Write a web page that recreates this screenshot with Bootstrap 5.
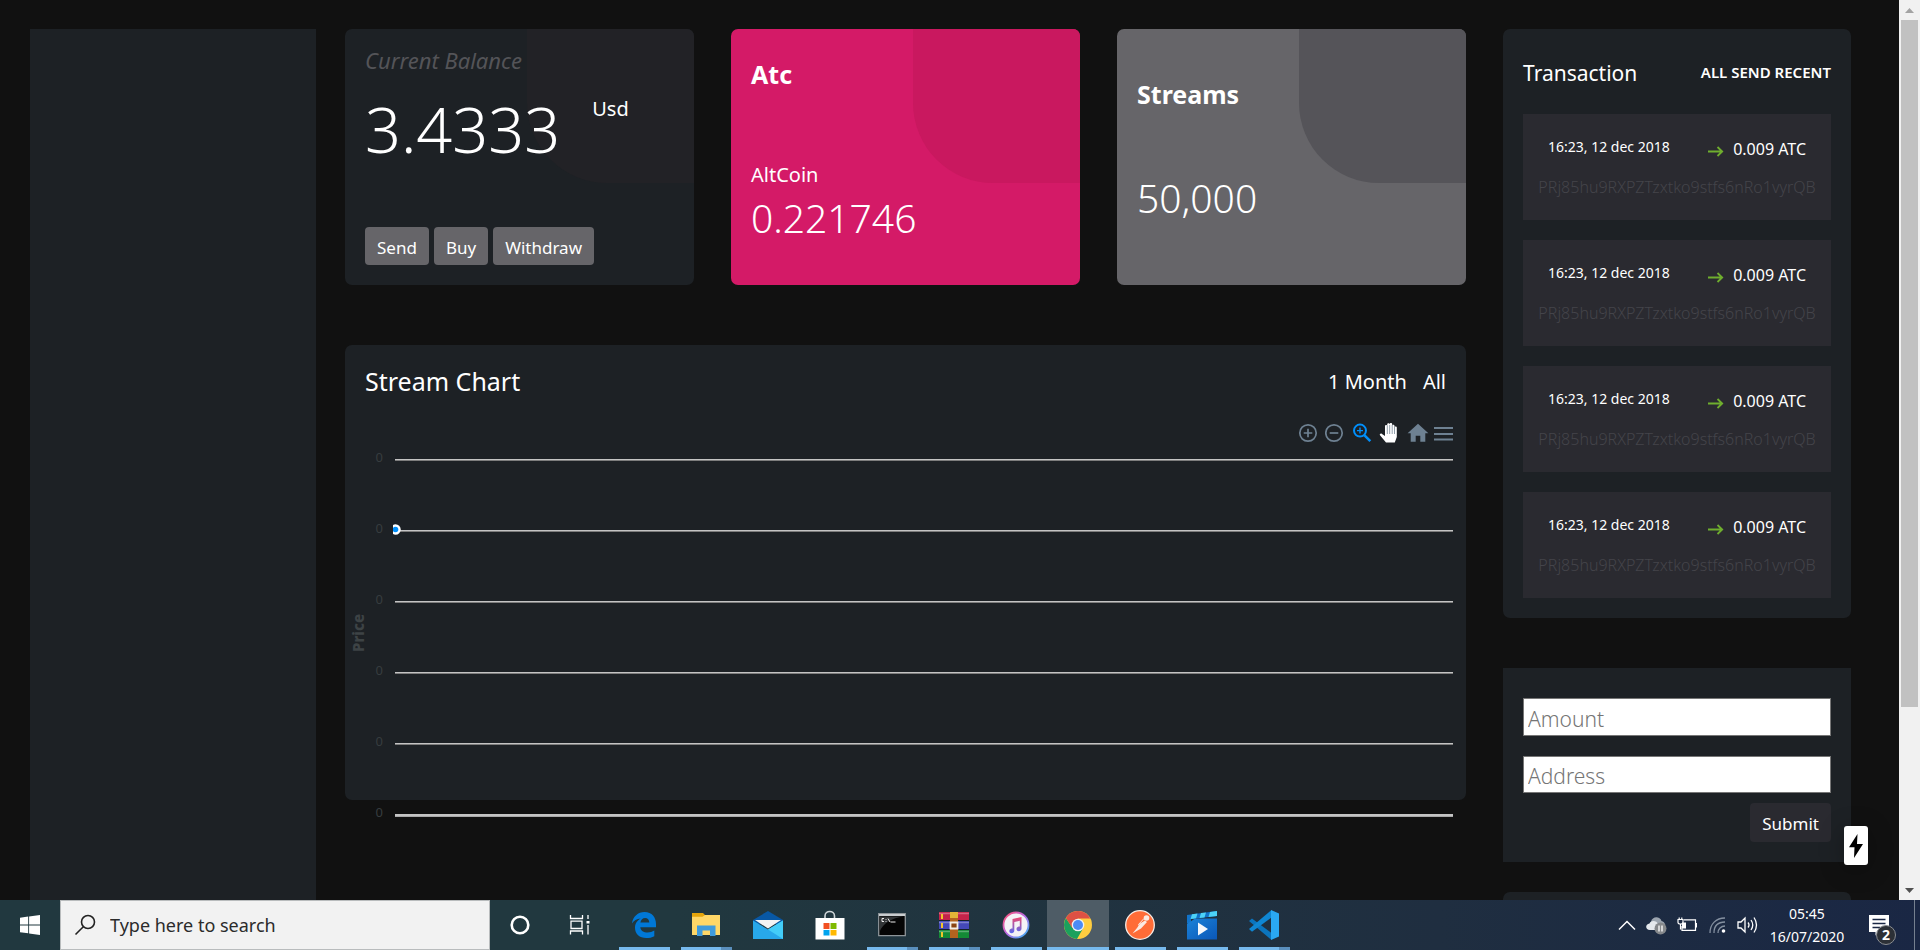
<!DOCTYPE html>
<html lang="en">
<head>
<meta charset="utf-8">
<meta name="viewport" content="width=device-width, initial-scale=1">
<title>Wallet dashboard</title>
<link href="https://cdn.jsdelivr.net/npm/bootstrap@5.3.0/dist/css/bootstrap.min.css" rel="stylesheet">
<style>
  :root { --panel: #1d2125; --tile: #2a2a30; --page: #111; --muted-ink: #44444a; }
  body { background: var(--page); color: #fff; font-family: "Noto Sans", sans-serif; font-size: 20px; line-height: 30px; }
  a { color: inherit; text-decoration: none; }

  /* viewport of the browser */
  .view { min-height: 0; }
  .page { padding: 29px 48px 0 30px; min-width: 0; }
  .side { flex: 286 1 0; background: var(--panel); margin-right: 29px; }
  .center-col { flex: 1121 1 0; min-width: 0; margin-right: 37px; }
  .right-col { flex: 348 1 0; min-width: 0; }
  .panel { background: var(--panel); border-radius: 7px; }

  /* stat cards */
  .stats { display: grid; grid-template-columns: repeat(3, 1fr); gap: 37px; margin-bottom: 60px; }
  .stat { position: relative; overflow: hidden; min-height: 256px; padding: 0 20px 20px; border-radius: 7px; background: var(--panel); isolation: isolate; }
  .stat::before { content: ""; position: absolute; z-index: -1; top: 0; right: 0; width: 167px; height: 154px; border-bottom-left-radius: 80px; background: var(--corner); }
  .stat-balance { --corner: #222226; padding-top: 16px; }
  .stat-atc { --corner: #c9185f; background: #d41a67; padding-top: 26px; }
  .stat-streams { --corner: #555459; background: #666569; padding-top: 46px; }
  .caption { color: #545458; font-style: italic; font-size: 22px; margin-bottom: 14px; }
  .balance { font-size: 63px; line-height: 80px; font-weight: 300; }
  .unit { margin: 5px 0 0 32px; }
  .stat-name { font-size: 25px; line-height: 38px; font-weight: 700; }
  .figure-num { font-size: 39px; line-height: 50px; font-weight: 300; }
  .coin { margin-top: 67px; margin-bottom: 3px; }
  .gap-60 { margin-top: 60px; }
  .acts { gap: 5px; }
  .act { border: 0; border-radius: 4px; background: #666569; color: #fff; font-size: 17px; line-height: 24px; padding: 9px 12px 5px; }

  /* chart */
  .chart { height: 455px; padding-top: 17px; }
  .chart-title { font-size: 25px; line-height: 38px; font-weight: 400; }
  .chart-head { padding: 0 20px; margin-bottom: 21px; }
  .ranges { padding-top: 2px; }
  .tools { height: 24px; padding-right: 12px; margin-bottom: 4px; gap: 7px; }
  .tool { border: 0; padding: 0; background: none; display: flex; }
  .plot { padding: 0 13px 0 4px; }
  .axis-title { writing-mode: vertical-rl; transform: rotate(180deg); width: 18px; font-family: "Noto Sans", sans-serif; font-size: 15px; line-height: 18px; font-weight: 800; color: #3d4345; padding-top: 10px; }
  .grid-row { height: 22px; gap: 12px; color: #373d3f; font-size: 13px; line-height: 16px; }
  .grid-row span { width: 16px; text-align: right; }
  .grid-row i { position: relative; margin-top: 10px; height: 2px; background: #c4c4c4; border-bottom: 1px solid #7d7d7d; }
  .grid-row.base i { height: 3px; border-bottom-color: #a9a9a9; }
  .rows { gap: 49px; }
  .point { position: absolute; left: -2px; top: -6px; }

  /* transactions */
  .trans { padding: 29px 20px 20px; margin-bottom: 50px; }
  .trans-title { font-size: 21px; line-height: 30px; font-weight: 400; }
  .filters { font-size: 15px; font-weight: 600; line-height: 28px; }
  .trans-list { gap: 20px; margin-top: 26px; }
  .entry { background: var(--tile); padding: 23px 0 21px; }
  .entry-row { padding: 0 25px; margin-bottom: 14px; }
  .when { font-size: 14px; line-height: 20px; }
  .sum { font-size: 16px; line-height: 24px; }
  .hash { color: var(--muted-ink); font-size: 16px; line-height: 24px; font-weight: 300; text-align: center; white-space: nowrap; }

  /* send form */
  .send { background: var(--panel); height: 194px; padding: 30px 20px 20px; margin-bottom: 30px; }
  .field { width: 100%; height: 38px; border: 1px solid #767676; border-radius: 0; background: #fff; color: #222; padding: 3px 4px 0; margin-bottom: 20px; font-size: 21px; display: block; }
  .field + .field { margin-bottom: 10px; height: 37px; }
  .field::placeholder { color: #757575; opacity: 1; font-weight: 300; }
  .submit { background: var(--tile); padding-bottom: 6px; }
  .bolt { position: absolute; right: 52px; bottom: 35px; width: 24px; height: 39px; border: 0; border-radius: 3px; padding: 0; background: #fff; box-shadow: 0 4px 24px rgba(0,0,0,.3); display: flex; align-items: center; justify-content: center; }

  /* scroll bar */
  .scroller { width: 21px; background: #f1f1f1; }
  .scroller b { width: 17px; flex: 0 0 76.3%; background: #c1c1c1; }
  .scroller svg { height: 20px; flex: none; }

  /* task bar */
  .taskbar { height: 50px; flex: none; background: linear-gradient(90deg, #21383f 0, #21383f 35%, #1f2e40 75%, #1a2744 100%); }
  .start { width: 60px; }
  .tb { border: 0; padding: 0; background: none; display: flex; align-items: center; justify-content: center; height: 50px; }
  .search { width: 430px; background: #f2f2f2; border: 1px solid #b9bcbd; color: #2b2b2b; padding-left: 13px; gap: 14px; }
  .search input { border: 0; background: none; padding: 0; font: 400 18px/24px "Noto Sans", sans-serif; outline: 0; }
  .search input::placeholder { color: #2b2b2b; opacity: 1; }
  .sys { width: 60px; }
  .apps { margin-left: 3px; }
  .app { width: 62px; position: relative; }
  .app.run::after { content: ""; position: absolute; left: 6px; right: 5px; bottom: 0; height: 3px; background: #76b9ed; }
  .app.multi::after { background: linear-gradient(90deg, #76b9ed 0 40px, #5a8fbd 40px); }
  .app.front { background: #4e5c66; }
  .app.front::after { left: 0; right: 0; }
  .clock { font-size: 14px; line-height: 23px; width: 78px; text-align: center; }
  .tray { gap: 10px; margin-right: 18px; }
  .tray svg { flex: none; }
  .notice { position: relative; margin-left: 3px; display: flex; }
  .notice-count { position: absolute; right: 0; bottom: -3px; width: 20px; height: 20px; border-radius: 50%; border: 1px solid #8a8d91; background: #2c3036; font-size: 14px; line-height: 18px; font-weight: 700; text-align: center; }
  .peek { width: 6px; height: 50px; border-left: 1px solid #75808f; }
</style>
</head>
<body class="vh-100 d-flex flex-column overflow-hidden">

<div class="view d-flex flex-grow-1 position-relative">
  <div class="page d-flex flex-grow-1 overflow-hidden">
    <aside class="side"></aside>

    <main class="center-col">
      <section class="stats">
        <div class="stat stat-balance d-flex flex-column">
          <div class="caption">Current Balance</div>
          <div class="d-flex align-items-start">
            <div class="balance">3.4333</div>
            <div class="unit">Usd</div>
          </div>
          <div class="acts d-flex mt-auto">
            <button class="act" type="button">Send</button>
            <button class="act" type="button">Buy</button>
            <button class="act" type="button">Withdraw</button>
          </div>
        </div>
        <div class="stat stat-atc">
          <div class="stat-name">Atc</div>
          <div class="coin">AltCoin</div>
          <div class="figure-num">0.221746</div>
        </div>
        <div class="stat stat-streams">
          <div class="stat-name">Streams</div>
          <div class="figure-num gap-60">50,000</div>
        </div>
      </section>

      <section class="panel chart">
        <div class="chart-head d-flex justify-content-between align-items-center">
          <h2 class="chart-title m-0">Stream Chart</h2>
          <div class="ranges d-flex gap-3"><a href="#">1 Month</a><a href="#">All</a></div>
        </div>
        <div class="tools d-flex justify-content-end align-items-center">
          <button class="tool" type="button" aria-label="Zoom in"><svg width="20" height="20" viewBox="0 0 20 20" fill="none" stroke="#6e8192" stroke-width="1.7"><circle cx="10" cy="10" r="8.2"/><path d="M10 5.7v8.6M5.7 10h8.6"/></svg></button>
          <button class="tool" type="button" aria-label="Zoom out"><svg width="20" height="20" viewBox="0 0 20 20" fill="none" stroke="#6e8192" stroke-width="1.7"><circle cx="9" cy="10" r="8.2"/><path d="M4.7 10h8.6"/></svg></button>
          <button class="tool" type="button" aria-label="Zoom selection"><svg width="20" height="20" viewBox="0 0 20 20" fill="none" stroke="#008ffb"><circle cx="8" cy="7.6" r="6" stroke-width="2"/><path d="M12.3 12.2l6 6" stroke-width="2.6"/><path d="M8 4.6v6M5 7.6h6" stroke-width="1.4"/></svg></button>
          <button class="tool" type="button" aria-label="Pan"><svg width="20" height="22" viewBox="0 0 20 22"><path d="M7 20.5L1 13.2c-.8-1 .8-2.300 2-1.300l3 2.200V4.200c0-1.600 2.200-1.600 2.200 0V2.600c0-1.800 2.500-1.800 2.500 0v-.3c0-1.600 2.500-1.600 2.500 0v1.500c0-1.500 2.300-1.500 2.300 0v1.800c0-1.400 2.300-1.400 2.300 0V15l-2 5.500z" fill="#fff"/><path d="M8.300 3.500V12M10.700 3V12M13.200 3V12M15.500 5V12" stroke="#8795a1" stroke-width=".9"/></svg></button>
          <button class="tool" type="button" aria-label="Reset zoom"><svg width="23" height="20" viewBox="-1 0 23 20"><path d="M11 .8L.6 10.200h3.100V18.800h5v-6h4.600v6h5v-8.600h3.100z" fill="#6e8192"/></svg></button>
          <button class="tool" type="button" aria-label="Menu"><svg width="18" height="20" viewBox="2 0 18 20" overflow="visible"><path d="M0 5h19M0 11h19M0 16.500h19" stroke="#6e8192" stroke-width="2.200"/></svg></button>
        </div>
        <div class="plot d-flex">
          <div class="axis-title align-self-center">Price</div>
          <div class="rows d-flex flex-column flex-grow-1">
            <div class="grid-row d-flex"><span>0</span><i class="flex-grow-1"></i></div>
            <div class="grid-row d-flex"><span>0</span><i class="flex-grow-1"><svg class="point" width="8" height="12" viewBox="0 0 8 12"><circle cx="2.500" cy="5.500" r="5.200" fill="#fff"/><circle cx="2.500" cy="5.500" r="2.800" fill="#008ffb"/></svg></i></div>
            <div class="grid-row d-flex"><span>0</span><i class="flex-grow-1"></i></div>
            <div class="grid-row d-flex"><span>0</span><i class="flex-grow-1"></i></div>
            <div class="grid-row d-flex"><span>0</span><i class="flex-grow-1"></i></div>
            <div class="grid-row base d-flex"><span>0</span><i class="flex-grow-1"></i></div>
          </div>
        </div>
      </section>
    </main>

    <div class="right-col">
      <section class="panel trans">
        <div class="d-flex justify-content-between">
          <h2 class="trans-title m-0">Transaction</h2>
          <div class="filters"><a href="#">ALL</a> <a href="#">SEND</a> <a href="#">RECENT</a></div>
        </div>
        <div class="trans-list d-flex flex-column">
          <div class="entry"><div class="entry-row d-flex justify-content-between"><div class="when">16:23, 12 dec 2018</div><div class="sum"><svg class="me-2" width="17" height="12" viewBox="0 0 17 12" fill="none" stroke="#6fae2e" stroke-width="1.800"><path d="M0 6.500h14M9.500 2l4.700 4.500-4.700 4.500"/></svg>0.009 ATC</div></div><div class="hash">PRj85hu9RXPZTzxtko9stfs6nRo1vyrQB</div></div>
          <div class="entry"><div class="entry-row d-flex justify-content-between"><div class="when">16:23, 12 dec 2018</div><div class="sum"><svg class="me-2" width="17" height="12" viewBox="0 0 17 12" fill="none" stroke="#6fae2e" stroke-width="1.800"><path d="M0 6.500h14M9.500 2l4.700 4.500-4.700 4.500"/></svg>0.009 ATC</div></div><div class="hash">PRj85hu9RXPZTzxtko9stfs6nRo1vyrQB</div></div>
          <div class="entry"><div class="entry-row d-flex justify-content-between"><div class="when">16:23, 12 dec 2018</div><div class="sum"><svg class="me-2" width="17" height="12" viewBox="0 0 17 12" fill="none" stroke="#6fae2e" stroke-width="1.800"><path d="M0 6.500h14M9.500 2l4.700 4.500-4.700 4.500"/></svg>0.009 ATC</div></div><div class="hash">PRj85hu9RXPZTzxtko9stfs6nRo1vyrQB</div></div>
          <div class="entry"><div class="entry-row d-flex justify-content-between"><div class="when">16:23, 12 dec 2018</div><div class="sum"><svg class="me-2" width="17" height="12" viewBox="0 0 17 12" fill="none" stroke="#6fae2e" stroke-width="1.800"><path d="M0 6.500h14M9.500 2l4.700 4.500-4.700 4.500"/></svg>0.009 ATC</div></div><div class="hash">PRj85hu9RXPZTzxtko9stfs6nRo1vyrQB</div></div>
        </div>
      </section>

      <form class="send">
        <input class="field" type="text" placeholder="Amount" aria-label="Amount">
        <input class="field" type="text" placeholder="Address" aria-label="Address">
        <div class="text-end lh-1"><button class="act submit" type="button">Submit</button></div>
      </form>

      <section class="panel h-50"></section>
    </div>
  </div>

  <div class="scroller d-flex flex-column align-items-center">
    <svg width="21" viewBox="0 0 21 20"><path d="M6 13l4.500-5 4.500 5z" fill="#a3a3a3"/></svg>
    <b></b>
    <svg class="mt-auto" width="21" viewBox="0 0 21 20"><path d="M6 8l4.500 5L15 8z" fill="#505050"/></svg>
  </div>

  <button class="bolt" type="button" aria-label="Quick actions"><svg width="16" height="24" viewBox="0 0 16 24"><path d="M9.500 0L1 13.200h5.500L6 24l9-14H9z"/></svg></button>
</div>

<footer class="taskbar d-flex align-items-center">
  <button class="tb start" type="button" aria-label="Start"><svg width="20" height="20" viewBox="0 0 20 20" fill="#fff"><path d="M0 2.800l8.200-1.200v7.900H0zM9.100 1.500L20 0v9.500H9.100zM0 10.400h8.200v7.900L0 17.200zM9.100 10.400H20V20L9.100 18.500z"/></svg></button>
  <div class="search tb justify-content-start">
    <svg width="22" height="22" viewBox="0 0 22 22" fill="none" stroke="#222" stroke-width="1.600"><circle cx="14" cy="8" r="6.500"/><path d="M9.300 12.700L1.500 20.500"/></svg>
    <input class="flex-grow-1" type="text" placeholder="Type here to search" aria-label="Search">
  </div>
  <button class="tb sys" type="button" aria-label="Cortana"><svg width="22" height="22" viewBox="0 0 22 22"><circle cx="11" cy="11" r="8.300" fill="none" stroke="#fff" stroke-width="2.600"/></svg></button>
  <button class="tb sys" type="button" aria-label="Task view"><svg width="22" height="22" viewBox="0 0 22 22" fill="none" stroke="#fff" stroke-width="1.300"><path d="M1.500 1v3.500h12V1M1.500 20.500V17h12v3.500M2 7.200h11v7.300H2zM19 1v4M19 11v9.500"/><path d="M17.500 7h3v2.500h-3z" fill="#fff" stroke="none"/></svg></button>

  <div class="apps d-flex">
  <button class="tb app run" type="button" aria-label="Edge"><svg width="26" height="28" viewBox="0 0 26 28"><path d="M1 12.500C1.800 5.500 7 1 13.500 1 21 1 25 6.500 25 13v3.200H9.300c.3 3.600 3.300 5.300 7.300 5.300 2.500 0 4.700-.7 6.700-1.900v5.600c-2.300 1.300-5 1.900-8 1.900C8.500 27.100 4 23 4 16.800c0-4 2.200-7.400 5.700-9.200C5.700 7.800 2.800 9.500 1 12.500zM9.400 11.500h8.900c0-2.800-1.600-4.600-4.200-4.600-2.500 0-4.300 1.800-4.700 4.600z" fill="#0078d7"/></svg></button>
  <button class="tb app run multi" type="button" aria-label="File Explorer"><svg width="28" height="26" viewBox="0 0 28 26"><path d="M0 1h11l2.500 2.500H28V22H0z" fill="#e5a50b"/><path d="M0 4.800h10.500L13 3h15v20H0z" fill="#ffd767"/><path d="M5 24V13.500h18.500V24H18v-5.500h-7.500V24z" fill="#3f9bdc"/></svg></button>
  <button class="tb app" type="button" aria-label="Mail"><svg width="30" height="28" viewBox="0 0 30 28"><path d="M0 9L15 0l15 9v4H0z" fill="#0858a5"/><path d="M0 9.500l15 9 15-9V28H0z" fill="#28a8ea"/><path d="M2 9h26L15 17.500z" fill="#f3f3f3"/><path d="M30 9.500L15 18.500 30 28z" fill="#43cdf8"/></svg></button>
  <button class="tb app" type="button" aria-label="Store"><svg width="30" height="30" viewBox="0 0 30 30"><path d="M10 9V6c0-6 9.500-6 9.500 0v3" fill="none" stroke="#cfd5d8" stroke-width="1.600"/><path d="M.5 8h29v21.500h-29z" fill="#fff"/><path d="M8.500 13h6v6h-6z" fill="#f25022"/><path d="M15.500 13h6v6h-6z" fill="#7fba00"/><path d="M8.500 20h6v5.500h-6z" fill="#00a4ef"/><path d="M15.500 20h6v5.500h-6z" fill="#ffb900"/></svg></button>
  <button class="tb app run multi" type="button" aria-label="Command Prompt"><svg width="28" height="24" viewBox="0 0 28 24"><path d="M.7.700h26.600v22H.7z" fill="#050505" stroke="#8d9498" stroke-width="1.300"/><path d="M1 1h26v2H1z" fill="#c9cdd0"/><path d="M1.500 3.500h24C14 5 5 10 1.500 19z" fill="#333638"/><path d="M6 5.500H4v3h2M8 6v.8M8 8v.8M10 5.500l2 3.500M12.500 9h5" stroke="#eee" fill="none"/></svg></button>
  <button class="tb app run multi" type="button" aria-label="WinRAR"><svg width="30" height="26" viewBox="0 0 30 26"><path d="M0 0h30v8H0z" fill="#c4234a"/><path d="M0 9h30v8H0z" fill="#4448b8"/><path d="M0 18h30v8H0z" fill="#138a36"/><path d="M0 1.500h30M0 10.500h30M0 19.500h30" stroke="#fff" stroke-opacity=".3" stroke-width="1.500"/><path d="M0 8.500h30M0 17.500h30" stroke="#15202a"/><path d="M3 2v5M3 11v5M3 20v5" stroke="#f2c62b" stroke-width="2"/><path d="M11 0h8v26h-8z" fill="#b4631f"/><path d="M11 0h8v6h-8z" fill="#e3b437"/><path d="M11.500 10.500h7v6h-7z" fill="#8a4412" stroke="#f2eee4" stroke-width="1.800"/></svg></button>
  <button class="tb app run" type="button" aria-label="iTunes"><svg width="28" height="28" viewBox="0 0 28 28"><defs><linearGradient id="ring" x1="0" y1="0" x2="1" y2="1"><stop offset="0" stop-color="#ff4f6d"/><stop offset=".5" stop-color="#b96be8"/><stop offset="1" stop-color="#2fb8f5"/></linearGradient><linearGradient id="note" x1="0" y1="0" x2="0" y2="1"><stop offset="0" stop-color="#f0476e"/><stop offset="1" stop-color="#5a6bf0"/></linearGradient></defs><circle cx="14" cy="14" r="12.500" fill="#f4f2f6" stroke="url(#ring)" stroke-width="1.800"/><path d="M10.500 8l9-2v11.500c0 3.500-5 3.500-5 .5 0-2 2-2.500 3.300-2.500V9.800l-5.500 1.200v8.500c0 3.500-5 3.500-5 .5 0-2 2-2.500 3.200-2.500z" fill="url(#note)"/></svg></button>
  <button class="tb app run front" type="button" aria-label="Chrome"><svg width="28" height="28" viewBox="0 0 28 28"><circle cx="14" cy="14" r="14" fill="#ffcd40"/><path d="M1.900 7A14 14 0 0 0 13 28l6-10.500L14 14 8.500 17z" fill="#1ba15d"/><path d="M1.900 7A14 14 0 0 1 26.300 7.500H14L8.300 17z" fill="#dd5144"/><circle cx="14" cy="14" r="6.300" fill="#f1f1f1"/><circle cx="14" cy="14" r="5" fill="#4c8bf5"/></svg></button>
  <button class="tb app run" type="button" aria-label="Postman"><svg width="30" height="30" viewBox="0 0 30 30"><circle cx="15" cy="15" r="14.300" fill="#ff6c37" stroke="#f6ebe5" stroke-width="1.300"/><circle cx="21.500" cy="8" r="2.800" fill="#fbe9e1"/><path d="M20 10.500l2 1.500-6 6.500-8.500 5 4.500-5.500 3-4.500z" fill="#fbe9e1"/><path d="M19 8.500l-5.500 6 1.500 2" fill="none" stroke="#fbe9e1"/></svg></button>
  <button class="tb app run" type="button" aria-label="Movies"><svg width="30" height="30" viewBox="0 0 30 30"><defs><linearGradient id="film" x1="0" y1="0" x2="1" y2="1"><stop offset="0" stop-color="#1a83d8"/><stop offset="1" stop-color="#0b57b8"/></linearGradient></defs><path d="M0 5l30-4v5L4 9v4.500H0z" fill="#1173c9"/><path d="M5 4.300L10.500 3.600 9 8.400 3.500 9zM14 3.100l5-.7-1.500 5-5 .6zM23 1.900l7-.9v5l-8.500 1z" fill="#4cd2f7"/><path d="M0 14L8 8.500h22V29.500H0z" fill="url(#film)"/><path d="M11 12.500v13l10-6.500z" fill="#f5f8fb"/></svg></button>
  <button class="tb app run multi" type="button" aria-label="Visual Studio Code"><svg width="30" height="30" viewBox="0 0 30 30"><path d="M0 11l3-2.500L22.500 23v7L0 11z" fill="#0b74bd"/><path d="M0 19l3 2.700L22.500 7.500V0z" fill="#0f86d2"/><path d="M22 0l8 3.500v23L22 30z" fill="#2aa8f2"/></svg></button>
  </div>

  <div class="tray ms-auto d-flex align-items-center">
    <svg width="18" height="12" viewBox="0 0 18 12" fill="none" stroke="#fff" stroke-width="1.500"><path d="M1 10.500l8-8 8 8"/></svg>
    <svg width="21" height="20" viewBox="0 0 21 20"><path d="M5 7c1-6 9-6 10.500-1 4 .5 5 6 1 8H6z" fill="#9ba4ae"/><path d="M4 15c-5 0-5-6-.5-6.500C5.500 4.500 11 6 12 9l4 6z" fill="#e4e8ec"/><circle cx="14.500" cy="13.500" r="6" fill="#85888b"/><path d="M13 10.500v6M16 10.500v6" stroke="#fff" stroke-width="1.300"/></svg>
    <svg width="20" height="16" viewBox="0 0 20 16" fill="none" stroke="#fff" stroke-width="1.200"><path d="M7 2.800h11.500v10.500H5V9M18.500 6.500h1.200v3.500h-1.200M1 2.500h5v3c0 2-5 2-5 0zM2.200 2.500V.5M4.800 2.500V.5M3.500 7v5.500"/><path d="M5 5.500h4v6H5z" fill="#fff" stroke="none"/></svg>
    <svg width="20" height="18" viewBox="0 0 20 18" fill="none" stroke="#8490a0" stroke-width="1.300"><path d="M3 17C3 8 9 2 18 2M7 17c0-7 4-11 11-11M11 17c0-4 3-7 7-7"/><circle cx="16.500" cy="15" r="1.800" fill="#fff" stroke="none"/></svg>
    <svg width="21" height="18" viewBox="0 0 21 18" fill="none" stroke="#fff" stroke-width="1.300"><path d="M1 6h3l4-4v14l-4-4H1zM11 6.500q2 2.500 0 5M14 4q3.500 5 0 10M17 1.500q5 7.500 0 15"/></svg>
    <div class="clock">05:45<br>16/07/2020</div>
    <div class="notice"><svg width="37" height="34" viewBox="0 0 37 34"><path d="M10 7h20v17H20.500l-4 3.500V24H10z" fill="#fff"/><path d="M13.500 11.500h13M13.500 15.500h13M13.500 19.500h8" stroke="#1a2744" stroke-width="1.400"/></svg><span class="notice-count">2</span></div>
  </div>
  <div class="peek"></div>
</footer>

<script src="https://cdn.jsdelivr.net/npm/bootstrap@5.3.0/dist/js/bootstrap.bundle.min.js"></script>
</body>
</html>
